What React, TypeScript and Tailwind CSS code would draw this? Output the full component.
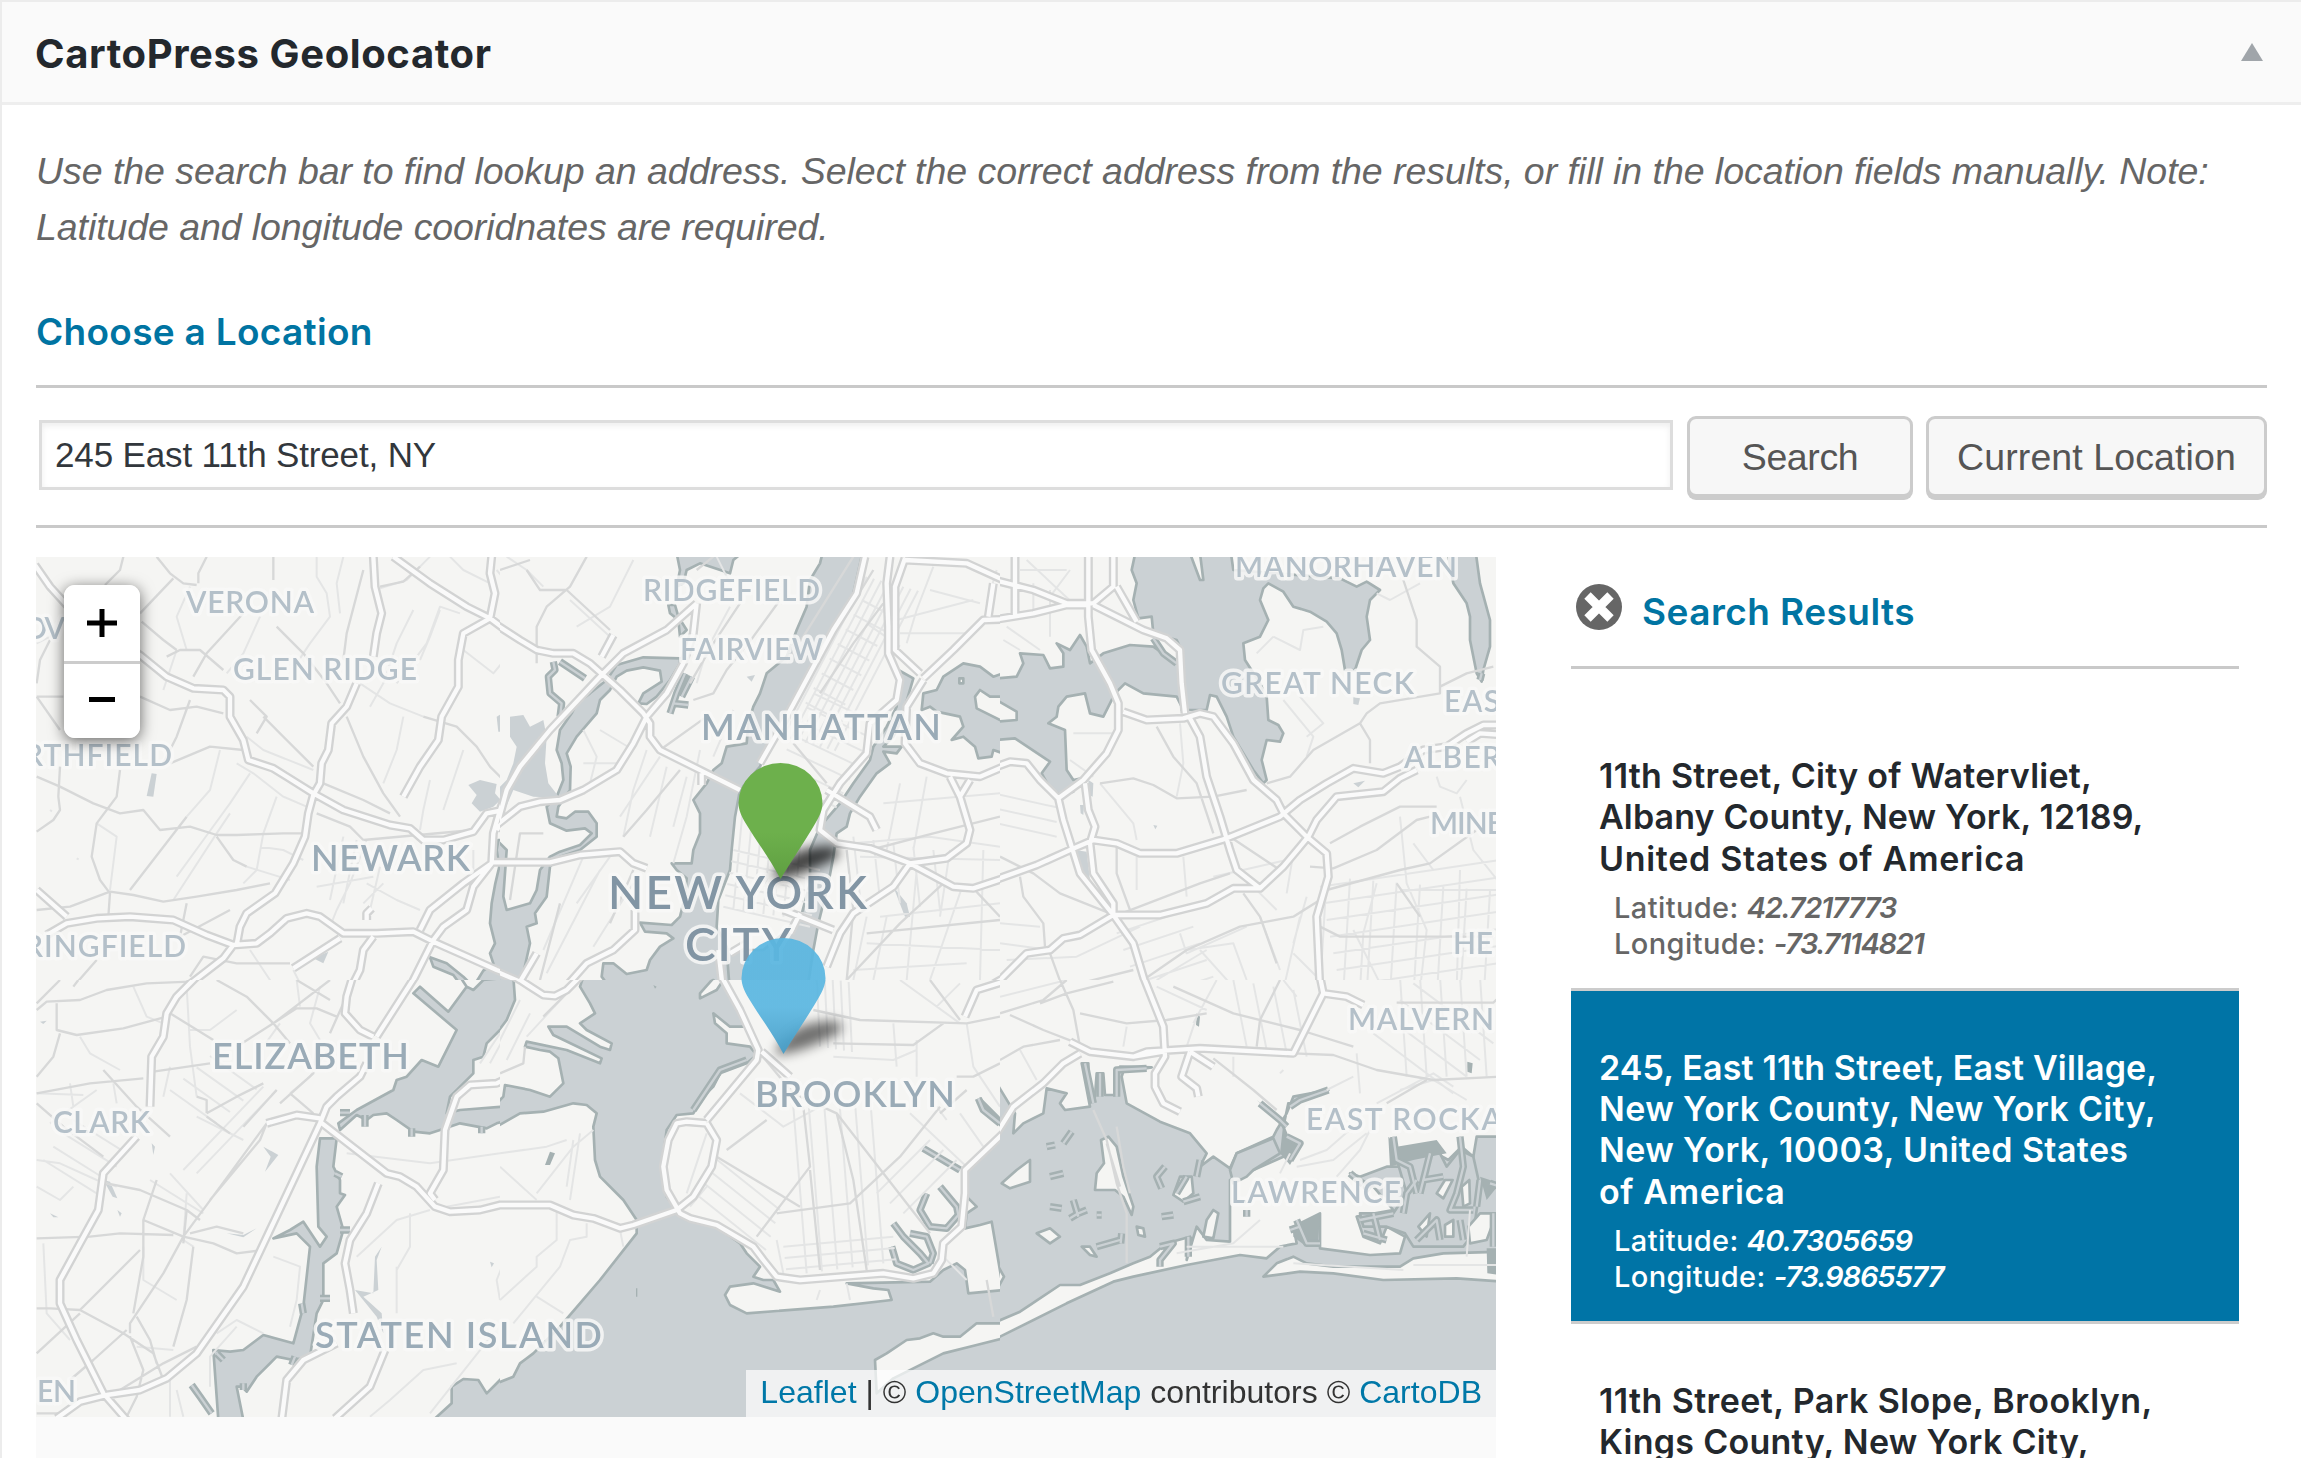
import React from "react";

type Tile = {
  x: number;
  y: number;
  w: number;
  h: number;
  sea?: boolean;
  land?: string[];
  water?: string[];
  islands?: string[];
  marsh?: string[];
  creeks?: string[];
  minor: string;
  street: string;
  major: string;
};

// n parallel street segments, each shifted by (dx, dy) from the one before
function hatch(x1: number, y1: number, x2: number, y2: number, dx: number, dy: number, n: number) {
  let d = "";
  for (let i = 0; i < n; i++) {
    d += `M${x1 + dx * i},${y1 + dy * i}L${x2 + dx * i},${y2 + dy * i}`;
  }
  return d;
}

// Map sections; coordinates are in thirds of a pixel
const TILES: Tile[] = [
  {
    x: 30, y: 550, w: 470, h: 430,
    water: [
      "M1405,870 1400,900 1408,950 1396,1000 1385,1060 1380,1120 1395,1180 1380,1210 1390,1240 1360,1262 1330,1310 1300,1280 1250,1240 1200,1222 1210,1250 1270,1275 1310,1330 1450,1330 1450,870z",
    ],
    marsh: [
      "M365,670 380,672 370,740 350,738z",
      "M1315,705 1350,690 1400,702 1395,730 1412,750 1390,770 1350,785 1325,760 1340,735z",
      "M1400,500 1425,485 1430,545 1405,545z",
      "M850,1225 895,1205 880,1240z",
    ],
    minor:
      "M690,200 640,310 590,370M860,20 860,80 890,130 900,200 840,280 800,340M940,20 920,100 930,190M1200,20 1130,90 1050,115M1150,180 1100,280 1060,400 1020,470M1230,180 1200,260 1170,330M1290,190 1230,170 1190,280 1100,400M1300,300 1390,370 1440,310 1500,260M990,400 1080,460 1180,500M570,600 540,720 470,800M660,670 600,760 520,870 440,980M740,740 700,850 680,960 640,1000M830,770 760,740 670,670 620,640M850,660 700,600 650,560M1120,500 1100,600 1060,700M1170,840 1180,780 1200,690M1240,780 1300,600M1010,870 960,1000 920,1080 900,1130M1060,1000 1000,1060M660,1200 720,1290 700,1320M790,1260 820,1320M1330,1000 1330,900M20,280 80,250M1400,60 1500,180M1260,20 1300,60 1400,110M690,890 760,900 820,930M1010,1000 1100,1050 1170,1080M940,860 900,1050M980,870 940,1060M1050,950 1020,1080M650,950 780,990M860,1010 1030,980M200,820 260,860 240,1020M440,300 400,420M480,110 440,200 470,300M600,790 560,850 430,1050 M140,925 146,928M60,780 66,784",
    street:
      "M280,20 270,60 225,105M530,20 505,70 505,100M380,20 420,70 460,100 500,105M430,85 330,190M335,215 400,270 440,300M410,320 450,300 510,300 580,360M640,190 530,310 490,380M730,20 730,90M740,230 820,310 890,400 930,460M1000,60 950,250 940,330M1050,110 1120,95 1170,50M1180,500 1280,530 1340,590 1380,650 1440,710M950,500 1000,620 1060,730 1110,800M20,440 100,440M20,440 90,540M330,440 420,480 500,470 580,490M480,450 440,560 400,640M420,640 540,590 640,600M470,800 300,1020M20,680 90,710 190,760 270,790 340,780 390,840 480,830 560,855 620,855 760,850 830,850M90,650 85,740 90,780 70,810 20,845M270,660 260,740 200,820 185,920 210,990 240,1030 235,1100M20,1080 120,1070 240,1025 310,1035 400,1055 500,1040 620,1020 720,1000M560,860 610,930 650,950M880,700 1000,750 1080,790M860,790 960,830 1000,870M470,1060 450,1160 600,1080M60,270 30,330 20,400M480,1280 520,1220 620,1240 780,1240M200,1310 340,1295 450,1300M130,1310 200,1230M1000,870 1330,840M660,450 710,500 680,550M700,500 850,650",
    major:
      "M15,45 60,110 110,165 200,230 330,315 410,380 490,415 580,420 600,440 600,500 640,570 655,630 730,655 850,730 940,780 1080,825 1140,835 1180,870 1240,870 1330,845 1370,790 1420,780M1030,20 1035,110 1055,190 1040,250 1030,320M980,400 950,470 905,520 895,600 875,640 870,700 850,735 835,790 825,860 790,940 735,1030 650,1090 630,1130 620,1185M1090,20 1200,100 1310,170 1380,205 1440,250 1500,290M1385,20 1380,70 1395,130 1380,205 1300,250 1285,330 1285,410 1235,500 1225,570 1170,650 1120,740M20,1020 110,1100M50,1155 110,1120 200,1105 300,1100 430,1110 530,1155 610,1185 680,1180 720,1150 770,1105 830,1090 870,1100 940,1150 1040,1150 1150,1145 1210,1175 1300,1215 1400,1260 1480,1290M610,1185 580,1225 470,1310 440,1330M1500,620 1440,700 1410,780 1390,850 1385,940 1300,1000 1200,1080 1170,1140M1385,940 1330,1010 1310,1080 1240,1130 1210,1170 1130,1330M790,1255 860,1210 930,1165M1030,1160 1000,1200 990,1260 955,1330M1480,770 1430,800 1400,840M1385,937 1500,937M1010,1110 1010,1090 1025,1075",
  },
  {
    x: 500, y: 550, w: 500, h: 430,
    water: [
      "M970,0 960,40 930,90 920,170 890,240 860,320 830,345 800,370 780,430 760,470 745,520 740,580 680,590 665,640 640,660 620,700 580,750 600,790 600,850 580,900 575,940 515,940 530,960 560,985 555,1040 540,1100 515,1125 420,1118 435,1145 500,1150 520,1165 480,1190 450,1230 440,1260 380,1272 340,1240 310,1240 305,1280 320,1300 240,1315 230,1330 700,1330 690,1260 680,1190 650,1130 655,1050 690,960 695,900 705,800 720,720 780,650 800,600 880,460 940,340 1000,230 1060,130 1085,20 1085,0z",
      "M1195,360 1240,385 1215,470 1200,520 1180,560 1150,590 1205,590 1190,610 1150,605 1170,640 1130,670 1080,740 1050,790 1040,830 1010,850 1000,920 985,1000 970,1060 955,1120 940,1200 920,1330 690,1330 680,1200 790,1200 850,1150 900,1110 930,1000 930,900 960,830 1020,760 1060,700 1110,630 1120,590 1160,530 1190,470z",
      "M1270,430 1310,420 1330,380 1390,340 1440,350 1480,380 1510,370 1510,440 1470,440 1440,420 1425,440 1430,475 1510,515 1510,610 1480,600 1475,620 1435,625 1425,590 1390,560 1355,570 1390,530 1380,500 1310,485 1290,470 1265,480z",
      "M530,10 540,60 530,110 550,100 560,60 600,40 690,70 700,30 725,10z",
      "M505,165 525,165 535,200 560,240 540,260 535,210 510,190z",
      "M540,325 430,322 350,345 320,390 270,430 230,460 215,490 180,540 170,600 185,640 190,690 170,740 140,770 150,820 200,842 255,835 275,850 240,885 180,905 150,920 120,960 110,1020 90,1060 20,1080 10,1040 20,900 -10,870 -10,1290 50,1310 70,1270 90,1180 80,1130 110,1120 105,1090 140,1040 150,950 180,920 240,900 290,860 290,820 265,785 225,785 200,805 170,800 175,770 210,720 212,650 200,610 230,560 290,490 300,450 330,420 350,380 380,362 430,352 480,362 485,395 430,430 415,460 440,462 470,440 510,390 540,340z",
    ],
    marsh: [
      "M30,500 70,495 90,530 130,510 140,560 135,640 145,700 180,745 100,740 40,720 10,790 -10,790 -10,720 20,690 40,640 50,590 30,560z",
      "M375,685 378,700M400,890 404,900",
      "M1180,1010 1220,1060 1230,1100 1215,1100z",
      "M740,380 765,375 755,395z",
    ],
    islands: ["M600,1310 640,1290 650,1300 620,1330z", "M1378,385 1390,385 1390,400 1378,400z"],
    creeks: ["M160,335 165,360 145,380 150,430 185,460 180,500", "M180,335 255,385", "M555,370 530,430 510,490M575,380 545,440M565,465 520,460"],
    minor:
      hatch(1100, 80, 850, 560, 22, 6, 8) +
      hatch(940, 430, 1130, 520, -20, 42, 7) +
      hatch(1085, 150, 1180, 200, -24, 44, 8) +
      hatch(700, 900, 960, 960, -6, 34, 6) +
      hatch(730, 760, 700, 1080, 30, 4, 7) +
      hatch(1060, 860, 1080, 1040, 60, 10, 5) +
      "M20,20 80,60 130,110M210,150 330,260M400,30 330,170 230,230M650,20 690,100M600,600 560,800 520,940M690,170 620,300 590,400M700,480 640,620M440,600 400,720 370,860M500,650 450,860M560,680 520,830M480,620 360,800M300,540 400,600M250,640 350,640M250,540 290,620 270,700M1100,220 1200,290M1300,50 1250,180 1220,280M1290,120 1440,160M1200,250 1400,250M1190,210 1420,150M1150,760 1500,730M1060,880 1290,860 1500,890M1080,920 1500,930M1140,1100 1500,1060M1100,1180 1500,1200M1060,1260 1400,1240M1200,700 1160,900M1280,680 1240,900M1350,900 1320,1100M1450,900 1440,1290M1250,960 1220,1290M1100,1100 1060,1290M1160,1100 1120,1290M1390,1000 1290,1290M250,920 130,1200M330,920 230,1060M300,960 140,1270M400,1000 280,1190M1490,60 1460,160",
    street:
      "M0,60 90,30M260,20 210,110 140,170 110,230 110,340M80,60 120,120 200,120 330,240M640,20 590,60M840,150 760,260 680,360 640,430 580,450M860,340 1060,20M900,420 1120,60M1150,160 1060,280 960,430M720,160 640,280 570,400M620,500 480,600M540,660 440,780 370,860M980,700 880,580M1040,900 1060,1080 1040,1290M1110,900 1300,850 1500,800M1330,1000 1200,1120 1040,1290M1420,1015 1500,1100M1100,1150 1500,1110M30,1050 60,850 130,850M180,1060 120,1290M400,960 330,1120",
    major:
      "M-10,225 60,270 110,300 160,310 220,310 270,340 360,420 430,490 450,520 450,560 480,600 540,630 620,670 720,720M-10,830 20,720 60,650 150,540 300,380 370,310 500,240 590,160M590,160 580,250 550,340 500,430 440,500 400,580 350,660 250,720 180,750 120,755 60,770 -10,825M-10,937 150,937 240,915 360,905 400,940 440,955M405,1080 405,1140 340,1200 260,1240 180,1330M-10,1265 60,1295 120,1320M60,1295 110,1210M305,320 340,255M1095,20 1070,130 1000,240 930,370 860,500 780,640M1170,20 1160,100 1165,230 1165,310 1200,390 1190,450 1110,520 1100,610 1020,700 970,780 960,840 1010,880 1110,895 1230,940 1340,925 1400,880 1410,840 1380,740 1350,680M1215,25 1185,110 1185,300 1260,370M1270,385 1360,300 1450,210 1510,208M1215,30 1400,40 1510,90M1480,100 1465,200M1270,390 1220,470 1215,580 1260,640 1340,670 1440,680 1510,650M1410,690 1380,740M980,720 1110,800 1130,840M1230,940 1360,1010 1420,1015 1510,985M1230,940 1180,1010 1060,1090 1020,1150 980,1250M850,1080 1000,1140M900,1090 870,1150M655,1200 670,1330M690,1210 740,1180M1430,1330 1510,1285M605,670 605,705",
  },
  {
    x: 1000, y: 550, w: 500, h: 430,
    water: [
      "M-10,385 50,380 70,340 60,310 130,315 150,355 190,350 190,310 170,280 210,300 240,255 260,290 270,340 310,310 390,285 460,290 545,350 545,470 530,440 430,430 375,400 345,430 310,500 270,490 255,430 200,440 175,470 170,500 145,520 195,540 200,660 220,690 245,685 220,725 180,735 150,715 125,670 150,635 45,565 -10,570z",
      "M410,-10 395,60 410,100 400,150 415,205 455,200 460,250 530,270 545,300 545,480 620,480 630,435 650,440 680,500 700,560 760,660 790,700 800,690 785,630 800,570 840,575 850,550 835,525 805,510 800,440 780,400 735,330 730,280 780,260 805,210 780,150 790,115 805,100 850,125 880,170 930,185 980,215 1010,250 1025,300 1035,360 1065,360 1085,300 1110,270 1100,200 1110,150 1140,120 1100,95 1070,110 1020,85 700,60 690,-10z",
      "M1340,-10 1360,100 1400,160 1410,200 1410,270 1430,370 1445,395 1450,360 1470,290 1470,210 1440,100 1425,-10z",
    ],
    islands: ["M-10,450 50,485 50,510 -10,515z", "M570,10 600,90 610,90 600,10z"],
    marsh: ["M225,900 260,905 270,990 310,1040 300,1060 240,970z", "M265,690 280,700 278,740 268,735z", "M1060,442 1080,445 1075,465 1060,462z", "M1060,700 1095,692 1075,712z", "M460,825 472,827 466,838z", "M240,765 252,765 250,795 242,790z"],
    creeks: ["M460,265 490,310 530,340", "M1445,370 1440,390"],
    minor:
      hatch(980, 980, 960, 1320, 70, 6, 8) +
      hatch(-10, 820, 170, 860, 0, -44, 3) +
      hatch(960, 1010, 1500, 930, 10, 50, 7) +
      hatch(350, 1150, 560, 1080, 20, 50, 6) +
      "M80,30 230,170M60,60 200,60M100,100 100,200M150,120 150,260M20,230 120,300M210,60 150,140M10,270 60,300M820,260 900,300 910,240 970,230M850,450 940,560 920,620M900,440 970,520 920,560M770,310 820,260M540,520 550,640 530,740M220,550 340,550M210,630 280,680M300,700 400,820 410,870M640,980 860,930M720,970 830,1080M550,920 560,1040M410,920 410,1020M880,910 860,1030M1200,800 1220,1000 1280,1140 1260,1320M1310,680 1320,710 1370,730 1400,690M1380,740 1420,900 1500,1000M1200,1020 1500,1020M1130,1000 1090,1150 1080,1320M0,1120 120,1130M0,1180 150,1200M20,1230 230,1220 420,1130M540,1150 560,1210 740,1130M560,1200 700,1180 740,1290M780,1100 840,1260M900,1100 850,1320M880,1210 960,1290M470,1290 620,1200M1380,960 1370,1320M1240,880 1300,960M920,1040 880,1180M690,1300 600,1200M1060,1140 1150,1320M1260,100 1170,150 1130,130",
    street:
      "M470,530 520,620 590,700 640,850M300,700 400,685 460,705 530,745 640,740 740,720M800,700 870,680 940,600 1080,520 1100,490 1140,460 1320,430 1320,350 1250,290 1250,210 1210,90M1320,410 1400,370 1480,350M1080,520 1110,570 1110,640M990,880 1080,830 1200,770 1310,770M930,950 1000,955 1130,900 1250,810 1290,800M980,1020 1200,960 1290,940 1430,840M0,920 100,970 180,1030 330,1090M60,980 70,1040 130,1120 135,1190M350,890 350,970 390,1080M340,1100 600,1000 690,970M730,1030 780,1100 830,1240M150,1210 190,1320M960,1130 1020,1160 1480,1160M400,1260 200,1310M430,1290 560,1200 720,1130 880,1100 960,1050M1190,1000 1260,1100M690,860 840,960",
    major:
      "M-10,92 100,120 200,160 280,160 340,110 340,20M-10,208 100,190 200,165 270,165M265,20 265,200 275,300 330,400 355,460 355,540 320,610 250,690 175,745 120,690 80,640 30,635 -10,650M45,20 45,200M280,165 350,200 430,240 500,265 540,300 545,400 555,490M350,110 410,215M370,485 440,510 550,505 600,490 640,500 700,580 760,690 830,750 850,790 920,860 980,910 985,980 950,1100 960,1320M570,505 600,560 620,680 660,800 690,900 710,960 780,1015M-10,988 110,945 210,900 280,870 350,880 420,910 530,910 680,865 840,800 900,750 980,700 1060,655 1150,670 1200,650 1270,600 1340,590 1400,550 1450,525 1510,525M175,745 190,810 215,890 240,970 340,1095 400,1180 445,1330M255,700 265,780 285,830 270,880 280,970 340,1060 340,1095M-10,1300 80,1210 150,1200 190,1165 240,1155 340,1095 480,1095 620,1060 700,1015 780,1015 850,950 925,860 950,810 1010,740 1150,725 1200,685 1250,660M1400,575 1440,550 1510,555",
  },
  {
    x: 30, y: 980, w: 470, h: 437,
    water: [
      "M1290,-10 1310,20 1330,30 1360,0 1460,-10 1450,60 1430,130 1370,190 1360,230 1330,240 1330,280 1300,310 1260,350 1250,400 1290,390 1420,380 1430,320 1500,340 1500,400 1400,430 1370,445 1290,430 1230,450 1200,460 1150,455 1100,420 1070,400 1030,405 1010,420 980,405 930,450 925,430 980,390 1090,330 1100,300 1130,290 1175,240 1225,260 1280,150 1150,40 1170,20 1255,95 1310,20z",
      "M870,475 920,475 910,560 930,600 930,640 945,645 920,680 940,750 920,820 880,850 880,960 860,1000 840,1130 790,1140 740,1130 680,1190 650,1235 635,1220 620,1220 640,1320 565,1320 560,1250 550,1110 600,1115 640,1110 700,1065 790,1090 820,980 840,800 800,760 730,775 780,750 820,725 870,800 890,770 865,740 860,560z",
      "M1210,1320 1265,1270 1265,1220 1300,1197 1345,1200 1370,1240 1420,1190 1500,1130 1500,1320z",
    ],
    marsh: ["M975,930 1030,940 1035,830 1055,800 1040,840 1045,930 1000,950 1055,1000 1060,1060 1040,1010z", "M700,500 745,525 705,575 722,530z", "M220,600 240,605 262,655 248,650z", "M590,760 640,765 680,745 640,772z", "M365,490 375,500 370,525z", "M30,125 50,122 40,132z", "M60,700 85,712 70,712z", "M1380,845 1392,850 1385,862z", "M262,690 275,700 270,710z"],
    creeks: ["M485,1215 510,1250 545,1300", "M1005,405 1005,440M1145,445 1145,470M930,398 960,398M1355,440 1355,460M870,955 900,955M930,750 960,750M815,970 820,1000M915,580 935,590", "M560,1120 580,1140M640,1210 640,1230M795,1130 785,1155"],
    minor:
      hatch(560, 430, 420, 330, 40, -34, 4) +
      hatch(40, 540, 200, 640, 30, -40, 4) +
      "M20,340 160,345M150,170 180,220 270,270M310,20 350,110 400,130M470,20 480,200 500,350M620,90 540,150 480,150M800,0 810,80M870,20 840,130 870,180M700,200 750,130M120,310 130,380M250,310 260,370M400,350 420,260M60,430 200,330M20,540 90,550 200,600 260,620M20,620 90,660 130,620M470,640 460,780 490,800M700,320 460,570M740,330 500,580M500,410 640,480M420,580 520,690M360,600 520,700M340,800 340,900 440,960M730,830 810,860 800,960 780,1040M560,1060 620,1020 700,1060M40,790 50,1000 120,1080M540,1220 540,1130 620,1040M420,1170 420,1310M440,1230 460,1310M320,1100 430,1110M1100,860 1100,1000M1140,700 1140,800 1100,870M980,830 1100,720 1200,690M950,520 1200,550 1410,520M1250,680 1410,650M1440,800 1400,900 1410,960M1390,1060 1200,1300M1280,1150 1180,1170 1080,1260 1020,1310M1350,250 1410,160M1380,250 1440,140M900,200 840,290 780,340",
    street:
      "M20,90 50,65 150,60 230,30 350,10 480,5M80,70 80,150 140,165 280,145 410,110M90,160 70,230 20,290M20,70 90,0M130,20 145,0M560,0 650,50 730,130 780,190M730,130 900,0M620,200 800,85 860,85 920,110M370,275 540,250M20,340 180,310 340,295M20,370 100,440 220,530M220,270 320,380 420,470M420,100 550,180M500,350 530,360 530,400M530,400 620,350 700,310M530,410 600,460M230,610 330,630 470,690 510,720M380,600 340,720 340,830 310,1000M470,690 460,790M20,775 180,770 270,760 430,765M340,720 460,770 550,790 620,820 700,810M480,760 560,740 640,760M710,430 600,580 460,770 400,880 300,1030 300,1060M710,430 690,480 540,660M330,810 150,990M490,800 470,960 430,1100M20,985 60,985 150,990 280,1060 370,1120 400,1200M150,1000 20,1120M320,1010 360,1080 380,1150M290,1050 190,1140 120,1200M300,1070 340,1170 320,1250 290,1310M740,330 640,440M750,370 850,280 860,200M780,340 850,400M800,0 900,60M900,160 940,70M270,1230 400,1150 500,1100M20,1300 100,1300",
    major:
      "M500,-10 440,50 410,100 400,170 365,230 360,380M320,470 220,580 205,690 150,790 90,900 90,970 140,1080 220,1240 290,1320M80,1315 150,1265 230,1245 330,1230 410,1195 500,1120 640,920 720,750 800,580 870,430 890,380 920,350 990,290 1010,250M870,425 1070,580 1110,590 1160,620 1215,680 1260,695 1350,690 1430,670 1500,675M1155,-10 1040,170M968,-10 950,50 945,100 990,150 1030,170M710,430 800,405 870,415M1045,610 1010,700 960,780 945,850 960,930 970,1000M920,1090 820,1140 770,1200 755,1320M1065,1110 1020,1220 915,1315M1215,660 1200,640 1240,570 1245,450 1280,350 1320,315 1400,310 1440,290",
  },
  {
    x: 500, y: 980, w: 500, h: 437, sea: true,
    land: [
      "M40,-10 250,-10 240,20 270,70 285,100 240,130 260,150 335,190 330,210 300,200 200,140 145,140 160,165 305,235 300,250 200,210 80,185 75,200 120,210 150,215 175,235 190,310 150,350 90,330 15,315 10,350 -10,370 -10,160 20,120 45,60z",
      "M-10,440 60,400 130,395 220,370 260,375 290,400 280,440 285,540 300,590 370,660 410,720 410,760 300,900 180,1040 100,1120 60,1150 40,1190 -10,1210z",
      "M640,-5 600,40 600,55 650,30 670,0 720,80 745,140 690,140 640,100 645,130 680,160 680,190 750,200 770,225 740,250 660,280 640,320 610,350 580,400 530,405 500,450 485,560 500,650 530,690 560,715 650,740 720,790 740,820 780,860 760,890 790,900 820,900 840,935 760,910 690,920 675,945 690,975 740,1000 1000,980 1175,960 1165,930 1120,925 1040,910 1290,905 1330,870 1370,850 1395,870 1405,940 1510,930 1475,725 1440,735 1395,745 1400,700 1430,680 1400,650 1395,570 1510,470 1510,-10z",
      "M1125,1140 1160,1120 1220,1080 1260,1075 1300,1060 1330,1070 1380,1070 1430,1030 1510,1030 1510,1075 1430,1095 1330,1120 1180,1195 1130,1240z",
    ],
    marsh: ["M150,515 165,520 150,555 135,555z", "M408,925 412,925 412,950 408,950z", "M460,15 470,20 465,26z", "M1440,350 1500,410 1500,440 1430,370z"],
    creeks: [
      "M1280,640 1260,690 1290,740 1340,745 1375,705 1370,680 1320,620",
      "M1180,730 1210,770 1260,820 1285,850 1240,870 1190,850 1175,800",
      "M1230,760 1280,770 1300,820 1290,850",
      "M1270,505 1380,570",
      "M1435,355 1450,390 1500,430",
      "M580,390 620,330 660,270 740,240",
    ],
    minor:
      hatch(880, 380, 920, 880, 46, -6, 6) +
      hatch(640, 530, 840, 690, -14, 40, 4) +
      hatch(950, -10, 960, 200, 24, 4, 5) +
      hatch(850, 800, 1180, 770, 4, 34, 3) +
      hatch(1130, 640, 1290, 480, 40, 30, 3) +
      "M60,60 -10,200M90,100 20,240M200,40 80,170M0,520 140,500 200,480M220,480 200,620M240,460 210,660M0,560 110,660M110,640 220,500 280,450M170,680 170,780 110,830 110,860 0,960M260,730 260,770 210,780 180,860 40,1030M110,950 190,1000M360,750 370,800M560,640 620,460M570,680 620,620M720,340 850,440 960,380M830,780 850,880M1000,230 1180,240 1250,210M1180,130 1190,260M1250,180 1250,290M1400,130 1420,260 1500,380M1310,80 1380,10M1200,0 1380,130M1230,400 1400,560M1380,400 1450,500M1330,830 1400,900M1310,380 1340,420M960,930 950,960M1040,910 1050,960",
    street:
      "M780,220 880,340 1010,400 1150,580 1290,760M680,510 800,420M770,770 930,560 910,380M830,700 1050,670 1200,530 1320,380M940,90 1080,120 1400,130 1500,110M1000,190 1240,195 1330,130M1370,290 1420,290 1500,250M1010,400 1060,600 1100,870M930,570 960,870M650,530 800,620 900,680M1460,900 1480,1010M240,0 130,110M0,280 70,250 75,200M1290,0 1380,120M1320,400 1400,330",
    major:
      "M665,-10 720,90 775,210 770,240 620,420M785,215 870,290M620,430 560,425 530,430 505,480 490,560 500,630 540,700 570,715 650,735 760,800 790,840 830,890 900,900 1150,880 1240,895 1300,880 1325,840 1330,790 1385,740 1395,640 1395,570 1510,460M620,430 650,480 635,560 580,650 530,690 400,735 360,745 280,715 220,705 150,675 -10,675M-10,-40 60,0 130,45 165,48 200,30 240,-10M1395,110 1430,30 1510,5",
  },
  {
    x: 1000, y: 980, w: 496, h: 437, sea: true,
    land: [
      "M-10,-10 1510,-10 1510,470 1430,470 1420,530 1385,500 1345,540 1290,510 1250,510 1200,560 1160,560 1080,590 1050,580 1120,620 1180,690 1070,710 1090,770 1140,790 1160,740 1215,770 1200,820 1110,825 960,805 960,700 880,740 890,790 840,800 800,835 720,825 640,840 560,855 400,890 340,905 200,970 0,1070 -10,1075 -10,1025 60,995 180,915 240,915 330,880 400,850 450,830 500,790 570,770 560,840 590,740 620,780 690,785 690,660 690,600 760,570 850,530 900,500 870,490 850,440 865,370 985,330 880,350 860,400 830,450 820,470 710,520 690,565 640,530 600,560 620,520 570,460 480,425 380,370 365,290 370,275 455,262 360,260 345,345 315,345 310,280 290,280 285,350 265,350 265,250 245,250 270,380 195,390 180,370 200,340 140,325 130,400 70,430 40,460 45,400 -10,310z",
      "M790,890 830,850 880,830 920,850 1000,860 1200,860 1240,835 1330,820 1510,815 1510,905 1370,895 1150,900 1000,880 900,875z",
      "M5,610 50,570 90,540 90,605 30,625z",
      "M303,480 325,470 350,500 370,590 400,680 395,705 370,650 345,630 285,630 290,580 312,550z",
      "M520,645 540,590 575,590 580,640 550,665z",
      "M610,770 620,720 640,690 655,700 640,775z",
      "M110,760 150,745 180,770 150,790z",
      "M-10,850 12,890 -10,930z",
      "M245,800 270,800 290,830 270,825z",
      "M410,740 430,745 435,770 415,765z",
    ],
    water: [
      "M690,570 710,520 820,475 840,520 760,570 740,590 700,610z",
      "M1185,520 1320,520 1340,560 1380,510 1420,530 1440,620 1420,760 1390,800 1240,800 1215,760 1160,740 1090,740 1080,700 1180,700 1220,640z",
    ],
    islands: [
      "M1310,640 1335,600 1358,600 1330,655z", "M1385,620 1408,600 1410,670 1390,680z", "M1335,735 1360,720 1360,770 1335,770z", "M1405,740 1440,700 1490,700 1460,780 1410,790z", "M1255,740 1290,700 1280,770z",
    ],
    marsh: ["M880,740 960,700 955,780 920,800 880,770z", "M1165,470 1190,500 1310,480 1340,520 1240,540 1170,560z", "M1440,590 1500,610 1460,660z", "M1460,805 1500,805 1500,885 1462,880z", "M770,360 835,410 870,480 900,500 870,555 840,520 850,430z", "M590,100 600,110 597,140 588,135z", "M1402,245 1418,250 1415,280 1402,275z"],
    creeks: [
      "M255,250 280,370M300,280 300,350M350,350 350,270 440,265",
      "M870,380 900,360 985,330M780,370 840,420 860,440",
      "M860,470 900,490 870,540",
      "M140,500 165,495M190,490 215,455M150,590 190,580M150,680 185,685M210,715 235,700 260,690M220,660 235,710M290,705 305,705M290,800 360,780M365,760 362,790",
      "M495,560 470,590 485,625M485,710 520,705M550,665 600,650M530,640 560,590M590,590 600,540",
      "M480,800 520,790 480,840 480,860M565,770 565,830",
      "M890,720 920,790 960,790M870,750 900,740M740,690 740,710",
      "M1080,720 1180,700M1090,760 1160,780M1120,700 1140,780M1050,580 1110,630",
      "M1180,470 1190,540 1230,560 1250,640M1290,520 1260,640M1380,470 1390,560 1370,640 1350,690 1420,690M1440,600 1430,680M1250,780 1310,720 1320,780M1380,720 1390,780M1470,610 1500,620M1270,600 1330,590",
      "M1210,700 1220,640 1250,600M1480,700 1480,800",
    ],
    minor:
      hatch(1120, 160, 1360, 340, 40, -50, 4) +
      hatch(700, 0, 740, 200, 60, 10, 4) +
      hatch(1200, -10, 1220, 290, 60, 0, 5) +
      "M0,50 200,0M380,140 370,200M470,20 620,90M590,110 560,200M650,0 580,130M700,230 700,290M840,280 850,270M900,540 980,510 1060,440M890,560 1000,540 1100,460M1010,590 1080,510 1110,450M1070,220 1080,340M980,330 1060,290M1130,370 1300,280 1360,320M1200,330 1300,300 1400,360M530,820 700,790 780,720M560,800 760,800 850,800M880,850 1210,870M1240,855 1510,855M1400,830 1410,690M840,580 870,520M60,210 110,300M850,0 890,50",
    street:
      "M0,100 130,60 200,0M0,240 70,200 180,180M30,105 130,150 220,185M180,0 220,90 240,200M340,5 200,40 120,70M240,100 380,130 500,120 620,100M640,235 760,330 830,390M880,220 1000,225 1130,270 1300,300 1500,290M520,20 700,100 900,150 1060,200M780,120 840,0M780,120 770,200M1190,68 1480,68 1510,40M280,390 320,480 350,610 380,700 380,850M350,440 370,560 390,640M320,490 360,620M1160,370 1280,300",
    major:
      "M-10,460 40,380 130,310 190,250 240,220M210,185 270,215 400,230 440,215 600,205 880,220 930,120 970,40 960,-10M970,40 1040,50 1090,75M430,-10 490,140 495,230 465,280 465,320 490,370 540,395M570,215 545,290 590,325 595,350M570,215 640,260M400,230 490,215",
  },
];

const LAND = "#f5f5f3";
const WATER = "#cbd1d4";
const SHORE = "#a5b1b2";

function MapTile({ t }: { t: Tile }) {
  return (
    <svg x={t.x} y={t.y} width={t.w} height={t.h} viewBox={`0 0 ${t.w * 3} ${t.h * 3}`} fill="none" strokeLinejoin="round">
      <rect width={t.w * 3} height={t.h * 3} fill={t.sea ? WATER : LAND} />
      <g stroke={SHORE} strokeWidth={8}>
        {t.land?.map((d, i) => <path key={i} d={d} fill={LAND} />)}
        {t.water?.map((d, i) => <path key={i} d={d} fill={WATER} />)}
        {t.islands?.map((d, i) => <path key={i} d={d} fill={LAND} />)}
      </g>
      {t.marsh?.map((d, i) => <path key={i} d={d} fill={t.sea ? SHORE : WATER} />)}
      <g stroke={SHORE} strokeWidth={22}>{t.creeks?.map((d, i) => <path key={i} d={d} />)}</g>
      <g stroke={WATER} strokeWidth={7}>{t.creeks?.map((d, i) => <path key={i} d={d} />)}</g>
      <path d={t.minor} stroke="#e4e5e5" strokeWidth={6} />
      <path d={t.street} stroke="#d7d8d8" strokeWidth={7} />
      <path d={t.major} stroke="#d2d3d3" strokeWidth={27} />
      <path d={t.major} stroke="#fafafa" strokeWidth={13} />
    </svg>
  );
}

// text, left, baseline, width, font size, colour
const LABELS: [string, number, number, number, number, string][] = [
  ["VERONA", 186, 613, 128, 30, "#b4c0c9"],
  ["GLEN RIDGE", 233, 680, 184, 30, "#b4c0c9"],
  ["OV", 23, 639, 42, 30, "#b4c0c9"],
  ["RTHFIELD", 24, 766, 148, 30, "#b4c0c9"],
  ["RINGFIELD", 24, 957, 162, 30, "#b4c0c9"],
  ["NEWARK", 311, 871, 159, 36, "#9aabb7"],
  ["RIDGEFIELD", 643, 601, 177, 30, "#b4c0c9"],
  ["FAIRVIEW", 680, 660, 143, 30, "#b4c0c9"],
  ["MANHATTAN", 701, 740, 240, 36, "#9aabb7"],
  ["NEW YORK", 608, 909, 259, 46, "#8295a4"],
  ["CITY", 685, 961, 106, 46, "#8295a4"],
  ["MANORHAVEN", 1235, 577, 222, 30, "#b4c0c9"],
  ["GREAT NECK", 1221, 694, 193, 30, "#b4c0c9"],
  ["EAS", 1444, 712, 56, 30, "#b4c0c9"],
  ["ALBER", 1404, 768, 97, 30, "#b4c0c9"],
  ["MINE", 1430, 834, 74, 30, "#b4c0c9"],
  ["HE", 1453, 954, 40, 30, "#b4c0c9"],
  ["MALVERN", 1348, 1030, 146, 30, "#b4c0c9"],
  ["EAST ROCKA", 1306, 1130, 196, 30, "#b4c0c9"],
  ["LAWRENCE", 1231, 1203, 170, 30, "#b4c0c9"],
  ["BROOKLYN", 755, 1107, 200, 36, "#9aabb7"],
  ["STATEN ISLAND", 315, 1348, 287, 36, "#9aabb7"],
  ["ELIZABETH", 212, 1069, 197, 36, "#9aabb7"],
  ["CLARK", 53, 1133, 97, 30, "#b4c0c9"],
  ["EN", 37, 1402, 39, 30, "#b4c0c9"],
];

function Pin({ x, y, id, from, to, opacity }: { x: number; y: number; id: string; from: string; to: string; opacity: number }) {
  return (
    <g transform={`translate(${x} ${y})`}>
      <defs>
        <linearGradient id={id} x1="0" y1="0" x2="0" y2="1">
          <stop offset="0.6" stopColor={from} />
          <stop offset="1" stopColor={to} />
        </linearGradient>
        <filter id={`${id}-blur`} x="-50%" y="-80%" width="200%" height="260%">
          <feGaussianBlur stdDeviation="6" />
        </filter>
      </defs>
      <path d="M-8 0C2 -24 22 -32 50 -32C60 -32 62 -22 50 -17C34 -9 14 0 -8 2Z" fill="#000" opacity={opacity * 0.8} filter={`url(#${id}-blur)`} />
      <path d="M0 1C-12 -22 -25 -38 -35 -55C-39 -62 -42 -68 -42 -75A42 40 0 0 1 42 -75C42 -68 39 -62 35 -55C25 -38 13 -20 0 1Z" fill={`url(#${id})`} opacity={Math.min(1, opacity + 0.25)} />
    </g>
  );
}

function MapView() {
  return (
    <div className="relative h-[860px] w-[1460px] overflow-hidden bg-[#f5f5f3]">
      <svg className="block" width="1460" height="860" viewBox="36 557 1460 860">
        <filter id="tile-soften" x="0" y="0" width="100%" height="100%">
          <feGaussianBlur stdDeviation="0.7" edgeMode="duplicate" />
        </filter>
        <g filter="url(#tile-soften)">
          {TILES.map((t, i) => <MapTile key={i} t={t} />)}
          <g fontFamily="Lato, sans-serif" fontWeight={600} strokeOpacity={0.85} stroke="#f8f8f7" strokeWidth={7} paintOrder="stroke" strokeLinejoin="round">
            {LABELS.map(([s, x, y, w, size, color]) => (
              <text key={s} x={x} y={y} textLength={w} fontSize={size} fill={color}>{s}</text>
            ))}
          </g>
        </g>
        <Pin x={780.5} y={878} id="pin-green" from="#6db04c" to="#5f9f41" opacity={0.9} />
        <Pin x={783.5} y={1053} id="pin-blue" from="#5ab6e0" to="#459cc6" opacity={0.68} />
      </svg>
      <div className="absolute left-[28px] top-[28px] flex w-[76px] flex-col overflow-hidden rounded-[11px] shadow-[0_3px_15px_rgba(0,0,0,0.6)]">
        <button className="flex h-[79px] items-center justify-center border-b-[3px] border-[#ccc] bg-white">
          <svg width="30" height="30" viewBox="0 0 30 30"><path d="M15 1V29M0 15H30" stroke="#000" strokeWidth="5" /></svg>
        </button>
        <button className="flex h-[74px] items-center justify-center bg-white">
          <svg width="26" height="30" viewBox="0 0 26 30"><path d="M0 13.500H26" stroke="#000" strokeWidth="5" /></svg>
        </button>
      </div>
      <div className="absolute bottom-0 right-0 h-[47px] whitespace-nowrap bg-white/70 pl-[14px] pr-[14px] text-[32px] leading-[45px] tracking-[0.02px] text-[#333]">
        <span className="text-[#0078a8]">Leaflet</span> | © <span className="text-[#0078a8]">OpenStreetMap</span> contributors © <span className="text-[#0078a8]">CartoDB</span>
      </div>
    </div>
  );
}

type Line = [string, string];
type Result = { lines: Line[]; lat: Line; lon: Line; active?: boolean };

const RESULTS: Result[] = [
  {
    lines: [
      ["11th Street, City of Watervliet,", "tracking-[0.25px]"],
      ["Albany County, New York, 12189,", "tracking-[0.13px]"],
      ["United States of America", "tracking-[0.7px]"],
    ],
    lat: ["42.7217773", "tracking-[-1.3px]"],
    lon: ["-73.7114821", "tracking-[-1.4px]"],
  },
  {
    active: true,
    lines: [
      ["245, East 11th Street, East Village,", "tracking-[0.15px]"],
      ["New York County, New York City,", "tracking-[0.36px]"],
      ["New York, 10003, United States", "tracking-[0.38px]"],
      ["of America", "tracking-[0.6px]"],
    ],
    lat: ["40.7305659", "tracking-[-0.8px]"],
    lon: ["-73.9865577", "tracking-[-1.1px]"],
  },
  {
    lines: [
      ["11th Street, Park Slope, Brooklyn,", "tracking-[0.4px]"],
      ["Kings County, New York City,", "tracking-[0.28px]"],
    ],
    lat: ["", ""],
    lon: ["", ""],
  },
];

function ResultItem({ r }: { r: Result }) {
  return (
    <li className={`border-b-[3px] border-[#ccc] px-[28px] pb-[26px] pt-[56px] font-[Inter,sans-serif] ${r.active ? "bg-[#0074a6] text-white" : "text-[#23282d]"}`}>
      <h4 className="text-[34px] font-semibold leading-[41.300px]">
        {r.lines.map(([s, cls]) => <span key={s} className={`block whitespace-nowrap ${cls}`}>{s}</span>)}
      </h4>
      {r.lat[0] && (
        <div className={`pl-[15px] pt-[11px] text-[29px] font-medium leading-[36px] ${r.active ? "text-white" : "text-[#666]"}`}>
          <p className="flex gap-[8px]"><span className="tracking-[0.4px]">Latitude:</span><em className={`font-semibold ${r.lat[1]}`}>{r.lat[0]}</em></p>
          <p className="flex gap-[8px]"><span className="tracking-[0.4px]">Longitude:</span><em className={`font-semibold ${r.lon[1]}`}>{r.lon[0]}</em></p>
        </div>
      )}
    </li>
  );
}

export default function App() {
  return (
    <div className='flex h-[1458px] w-[2301px] flex-col overflow-hidden border-l-2 border-t-2 border-[#ececec] bg-white font-["Liberation_Sans",Arial,sans-serif]'>
      <header className="flex h-[103px] shrink-0 items-center justify-between border-b-[3px] border-[#eee] bg-[#fafafa] pl-[33px] pr-[38px]">
        <h2 className="pt-[3px] font-[Inter,sans-serif] text-[40px] font-bold leading-[60px] tracking-[0.6px] text-[#23282d]">CartoPress Geolocator</h2>
        <svg width="22" height="18" viewBox="0 0 22 18"><path d="M11 0L22 18H0Z" fill="#a0a5aa" /></svg>
      </header>

      <div className="flex min-h-0 flex-1 flex-col pl-[34px] pr-[34px] pt-[38px]">
        <p className="text-[37.500px] italic leading-[56px] text-[#666]">
          <span className="block whitespace-nowrap tracking-[-0.05px]">Use the search bar to find lookup an address. Select the correct address from the results, or fill in the location fields manually. Note:</span>
          <span className="block whitespace-nowrap tracking-[-0.08px]">Latitude and longitude cooridnates are required.</span>
        </p>

        <h3 className="mt-[52px] font-[Inter,sans-serif] text-[37px] font-semibold leading-[50px] tracking-[0.3px] text-[#0074a2]">Choose a Location</h3>

        <div className="mt-[28px] flex h-[143px] shrink-0 items-start border-y-[3px] border-[#c9c9c9] pl-[3px] pt-[28px]">
          <div className="mt-[4px] flex h-[70px] w-[1634px] items-center border-[3px] border-[#ddd] pl-[13px] text-[35px] tracking-[-0.15px] text-[#32373c] shadow-[inset_0_3px_6px_rgba(0,0,0,0.07)]">245 East 11th Street, NY</div>
          <button className="ml-[14px] h-[81px] w-[226px] rounded-[9px] border-[3px] border-[#ccc] bg-[#f7f7f7] text-[37.500px] leading-[72px] tracking-[-0.4px] text-[#555] shadow-[0_3px_0_#ccc]">Search</button>
          <button className="ml-auto h-[81px] w-[341px] whitespace-nowrap rounded-[9px] border-[3px] border-[#ccc] bg-[#f7f7f7] text-[37.500px] leading-[72px] tracking-[0.1px] text-[#555] shadow-[0_3px_0_#ccc]">Current Location</button>
        </div>

        <div className="flex min-h-0 flex-1 items-stretch pt-[29px]">
          <div className="w-[1460px] shrink-0 bg-[#fafafa]"><MapView /></div>
          <section className="ml-[75px] w-[668px] shrink-0">
            <div className="flex h-[112px] items-start border-b-[3px] border-[#c9c9c9] pl-[5px] pt-[27px]">
              <svg width="46" height="46" viewBox="0 0 46 46">
                <circle cx="23" cy="23" r="23" fill="#666" />
                <path d="M11.500 11.500L34.500 34.500M34.500 11.500L11.500 34.500" stroke="#fff" strokeWidth="9" />
              </svg>
              <h3 className="ml-[20px] mt-[3px] font-[Inter,sans-serif] text-[37px] font-semibold leading-[50px] tracking-[0.45px] text-[#0074a2]">Search Results</h3>
            </div>
            <ul className="pt-[30px]">
              {RESULTS.map((r, i) => <ResultItem key={i} r={r} />)}
            </ul>
          </section>
        </div>
      </div>
    </div>
  );
}
